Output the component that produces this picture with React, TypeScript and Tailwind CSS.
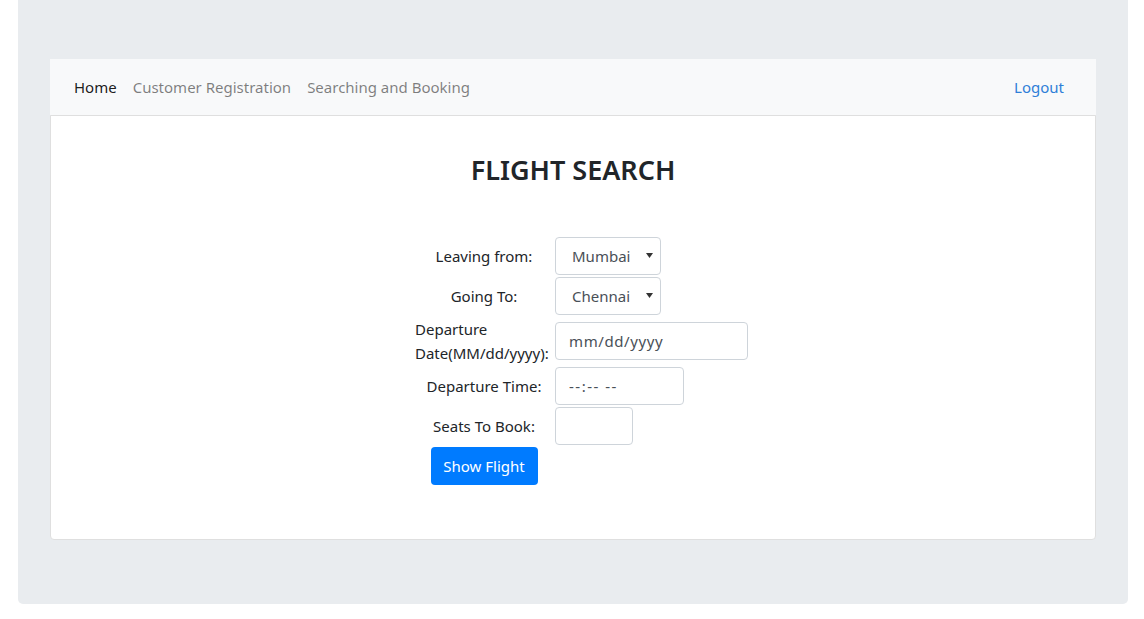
import React from "react";

const font = { fontFamily: '"Noto Sans", "Open Sans", sans-serif' };

function Caret() {
  return (
    <svg
      width="7"
      height="5"
      viewBox="0 0 7 5"
      className="pointer-events-none absolute right-[8px] top-[16px]"
      aria-hidden="true"
    >
      <path d="M0 0 H7 L3.5 5 Z" fill="#333" />
    </svg>
  );
}

function CitySelect({ value, options }: { value: string; options: string[] }) {
  return (
    <div className="relative w-[106px]">
      <select
        defaultValue={value}
        className="h-[38px] w-full appearance-none rounded border border-[#ced4da] bg-white pl-[16px] pr-6 text-[15px] text-[#495057] outline-none"
      >
        {options.map((o) => (
          <option key={o}>{o}</option>
        ))}
      </select>
      <Caret />
    </div>
  );
}

export default function App() {
  const cities = ["Mumbai", "Chennai", "Delhi", "Kolkata"];

  return (
    <div className="min-h-screen bg-white text-[#212529]" style={font}>
      <div className="ml-[18px] w-[1110px] rounded-b-[5px] bg-[#e9ecef] px-8 pb-16 pt-[59px]">
        {/* Navbar */}
        <nav className="flex h-14 items-center bg-[#f8f9fa] px-4 text-[15px] leading-6">
          <a href="#" className="px-2 text-black/90">
            Home
          </a>
          <a href="#" className="px-2 text-black/50">
            Customer Registration
          </a>
          <a href="#" className="px-2 text-black/50">
            Searching and Booking
          </a>
          <a href="#" className="ml-auto mr-2 px-2 text-[#2f7fd8]">
            Logout
          </a>
        </nav>

        {/* Card */}
        <div className="rounded-b border border-[#dfdfdf] bg-white pb-[54px] pt-[38px]">
          <h3 className="text-center text-[27px] font-semibold leading-[1.2] text-[#212529]">
            FLIGHT SEARCH
          </h3>

          <div className="mt-[51px] flex justify-center">
            <form className="ml-[17px] grid grid-cols-[138px_193px] items-center gap-x-[2px] gap-y-[2px] text-[15px] leading-6">
              <label className="flex h-[38px] items-center justify-center">Leaving from:</label>
              <CitySelect value="Mumbai" options={cities} />

              <label className="flex h-[38px] items-center justify-center">Going To:</label>
              <CitySelect value="Chennai" options={cities} />

              <label className="flex h-[48px] flex-col justify-center leading-6">
                <span>Departure</span>
                <span className="whitespace-nowrap">Date(MM/dd/yyyy):</span>
              </label>
              <input
                type="text"
                placeholder="mm/dd/yyyy"
                className="h-[38px] w-[193px] rounded border border-[#ced4da] bg-white px-[13px] text-[15px] tracking-[0.6px] text-[#495057] outline-none placeholder:text-[#495057]"
              />

              <label className="flex h-[38px] items-center justify-center">Departure Time:</label>
              <input
                type="text"
                placeholder="--:-- --"
                className="h-[38px] w-[129px] rounded border border-[#ced4da] bg-white px-[13px] text-[15px] tracking-[1.5px] text-[#495057] outline-none placeholder:text-[#495057]"
              />

              <label className="flex h-[38px] items-center justify-center">Seats To Book:</label>
              <input
                type="number"
                className="h-[38px] w-[78px] rounded border border-[#ced4da] bg-white px-[13px] text-[15px] text-[#495057] outline-none"
              />

              <div className="flex justify-center">
                <button
                  type="button"
                  className="h-[38px] w-[107px] rounded bg-[#007bff] text-[15px] text-white"
                >
                  Show Flight
                </button>
              </div>
              <div />
            </form>
          </div>
        </div>
      </div>
    </div>
  );
}
